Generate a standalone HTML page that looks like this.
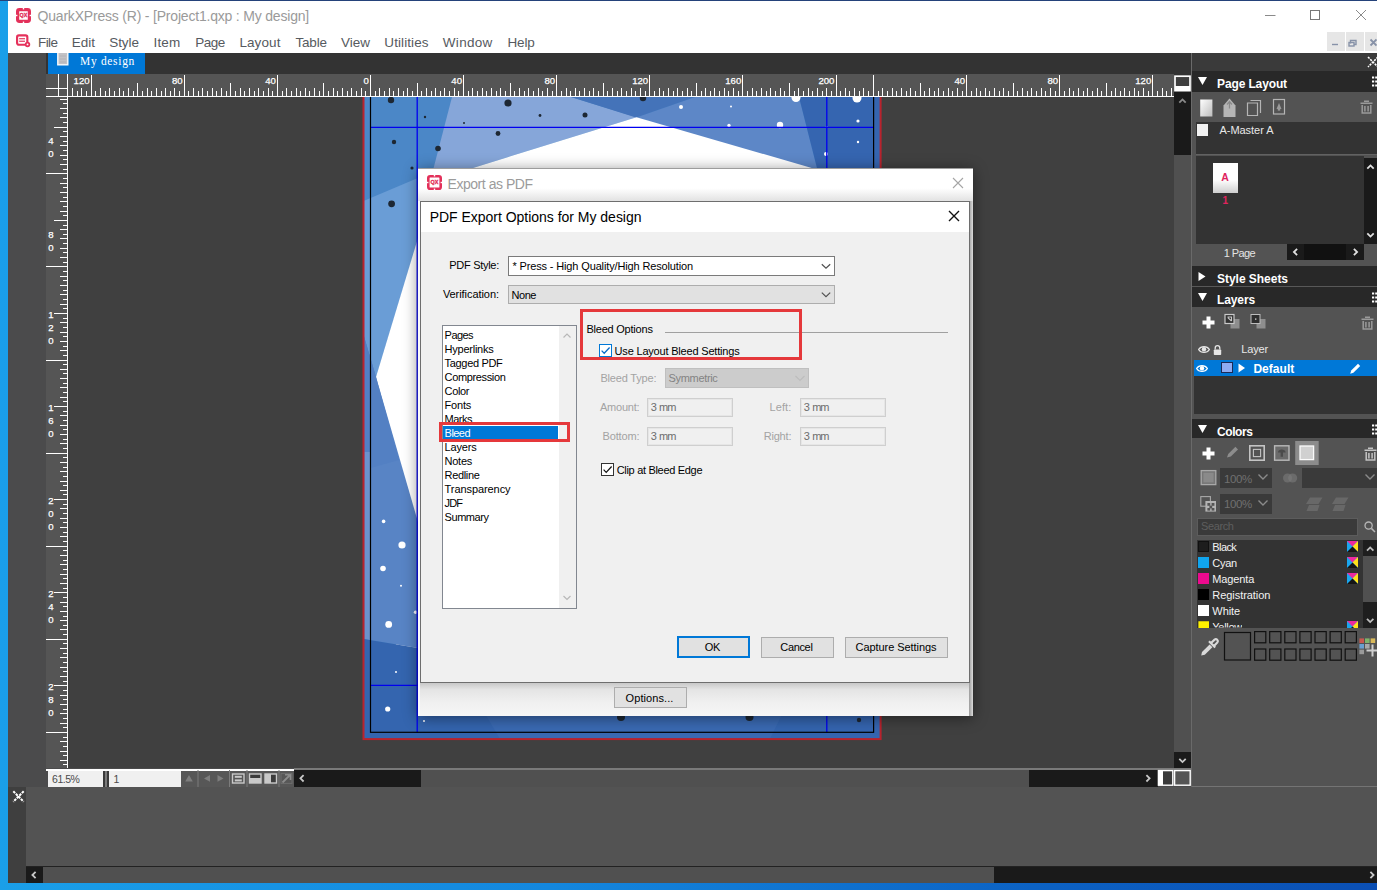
<!DOCTYPE html><html><head><meta charset="utf-8"><title>QuarkXPress - Export as PDF</title><style>html,body{margin:0;padding:0}body{width:1377px;height:890px;position:relative;overflow:hidden;background:linear-gradient(90deg,#1a9fe9 0%,#1487de 40%,#0c62c4 75%,#0b4fb4 100%);font-family:"Liberation Sans",sans-serif}</style></head><body><div style="position:absolute;left:8px;top:53px;width:1369px;height:830px;background:#535353;"></div><div style="position:absolute;left:46px;top:53px;width:1146px;height:21px;background:#333333;"></div><div style="position:absolute;left:48px;top:53px;width:97px;height:20.5px;background:#0078d7;"></div><svg style="position:absolute;left:57px;top:53px" width="12" height="14" viewBox="0 0 12 14"><rect x="0.8" y="-1" width="10" height="12.8" fill="#c2c2c6" stroke="#fafafa" stroke-width="1.4"/><path d="M2.5 3H9M2.5 6H9M2.5 9H9" stroke="#b0b0b4" stroke-width="0.8"/></svg><span style="position:absolute;left:80.0px;top:55.3px;line-height:14px;white-space:pre;font:normal 11.5px 'Liberation Serif', serif;color:#fff;letter-spacing:0.681px;">My design</span><div style="position:absolute;left:8px;top:53px;width:38px;height:734px;background:#4b4b4c;"></div><div style="position:absolute;left:68px;top:97px;width:1106px;height:671px;background:#404040;"></div><svg style="position:absolute;left:68px;top:97px" width="1106" height="671" viewBox="68 97 1106 671"><rect x="363.5" y="60" width="517.1" height="679.0999999999999" fill="#4b87c7"/><polygon points="363.5,201 432,172 440,200 418,240 376,377 363.5,335" fill="#6a9dd6"/><polygon points="452,97 571,97 636.5,117.2 466.5,170 431,178" fill="#86a6d9"/><polygon points="695,97 799,97 818,172 636,117.5" fill="#5d87c7"/><polygon points="571,97 695,97 636,117.5" fill="#4473b9"/><polygon points="799,97 880.6,97 880.6,739.0999999999999 818,739.0999999999999 818,172" fill="#3565b0"/><polygon points="636.5,117.2 816,169.2 816,700 400,700 376,377 418,238 466.5,170" fill="#fff"/><polygon points="363.5,335 376,377 418,522 418,648 363.5,639" fill="#5884c5"/><polygon points="363.5,335 376,377 399,460 363.5,470" fill="#5380c3"/><polygon points="364.5,452 370.0,452 370.0,640 364.5,639" fill="#6c93cd"/><polygon points="363.5,639 418,648 820,700 820,739.0999999999999 363.5,739.0999999999999" fill="#3465af"/><polygon points="477,700 789,700 770,739.0999999999999 500,739.0999999999999" fill="#3a6ab3"/><circle cx="391" cy="100" r="3.2" fill="#1d2733"/><circle cx="508" cy="103" r="3.6" fill="#1d2733"/><circle cx="425" cy="117" r="1.2" fill="#1d2733"/><circle cx="464" cy="123" r="1" fill="#1d2733"/><circle cx="540" cy="115.5" r="1.4" fill="#1d2733"/><circle cx="585" cy="115" r="2.5" fill="#1d2733"/><circle cx="498" cy="133.5" r="2.4" fill="#1d2733"/><circle cx="394" cy="142" r="2.2" fill="#1d2733"/><circle cx="438" cy="148.5" r="2.8" fill="#1d2733"/><circle cx="412" cy="168" r="1.6" fill="#1d2733"/><circle cx="391.6" cy="203.8" r="3.4" fill="#1d2733"/><circle cx="643" cy="98" r="3.2" fill="#1d2733"/><circle cx="621" cy="717" r="4" fill="#1d2733"/><circle cx="749.5" cy="717" r="4" fill="#1d2733"/><circle cx="859" cy="720" r="2.2" fill="#1d2733"/><circle cx="681" cy="107" r="2" fill="#fff"/><circle cx="731" cy="106.5" r="1" fill="#fff"/><circle cx="729" cy="125.5" r="1.7" fill="#fff"/><circle cx="780" cy="125" r="3.2" fill="#fff"/><circle cx="796" cy="97.5" r="4.5" fill="#fff"/><circle cx="857" cy="98" r="4.5" fill="#fff"/><circle cx="858" cy="121" r="1.6" fill="#fff"/><circle cx="858" cy="142" r="1.2" fill="#fff"/><circle cx="826" cy="154" r="2" fill="#fff"/><circle cx="383.6" cy="521.4" r="1.8" fill="#fff"/><circle cx="402" cy="545" r="3.6" fill="#fff"/><circle cx="383" cy="568.5" r="2.8" fill="#fff"/><circle cx="401" cy="585.7" r="1" fill="#fff"/><circle cx="415.6" cy="612.3" r="1.8" fill="#fff"/><circle cx="388.7" cy="624.4" r="3.4" fill="#fff"/><circle cx="396" cy="672" r="1" fill="#fff"/><circle cx="387.7" cy="709" r="2.6" fill="#fff"/><circle cx="424" cy="721" r="1" fill="#fff"/><circle cx="826.7" cy="127" r="1" fill="#fff"/><path d="M370.5 127.3H873.6M370.5 685.4H873.6M417.2 60V732.3M826.8 60V732.3" stroke="#0000f0" stroke-width="1.3" fill="none"/><rect x="370.5" y="80.7" width="503.1" height="651.5999999999999" fill="none" stroke="#000" stroke-width="1.2"/><rect x="363.5" y="73.7" width="517.1" height="665.3999999999999" fill="none" stroke="#b9232d" stroke-width="2"/></svg><svg style="position:absolute;left:68px;top:74px" width="1106" height="23" viewBox="0 0 1106 23"><rect width="1106" height="23" fill="#555555"/><path d="M23.5 1V23M116.5 1V23M209.5 1V23M302.5 1V23M395.5 1V23M488.5 1V23M581.5 1V23M674.5 1V23M768.5 1V23M805.5 1V23M898.5 1V23M991.5 1V23M1084.5 1V23M69.5 9V23M162.5 9V23M255.5 9V23M349.5 9V23M442.5 9V23M535.5 9V23M628.5 9V23M721.5 9V23M852.5 9V23M945.5 9V23M1038.5 9V23M4.5 14V23M13.5 14V23M32.5 14V23M41.5 14V23M51.5 14V23M60.5 14V23M79.5 14V23M88.5 14V23M97.5 14V23M106.5 14V23M125.5 14V23M134.5 14V23M144.5 14V23M153.5 14V23M172.5 14V23M181.5 14V23M190.5 14V23M200.5 14V23M218.5 14V23M228.5 14V23M237.5 14V23M246.5 14V23M265.5 14V23M274.5 14V23M283.5 14V23M293.5 14V23M311.5 14V23M321.5 14V23M330.5 14V23M339.5 14V23M358.5 14V23M367.5 14V23M376.5 14V23M386.5 14V23M404.5 14V23M414.5 14V23M423.5 14V23M432.5 14V23M451.5 14V23M460.5 14V23M470.5 14V23M479.5 14V23M498.5 14V23M507.5 14V23M516.5 14V23M525.5 14V23M544.5 14V23M553.5 14V23M563.5 14V23M572.5 14V23M591.5 14V23M600.5 14V23M609.5 14V23M619.5 14V23M637.5 14V23M646.5 14V23M656.5 14V23M665.5 14V23M684.5 14V23M693.5 14V23M702.5 14V23M712.5 14V23M730.5 14V23M740.5 14V23M749.5 14V23M758.5 14V23M777.5 14V23M786.5 14V23M795.5 14V23M814.5 14V23M824.5 14V23M833.5 14V23M842.5 14V23M861.5 14V23M870.5 14V23M880.5 14V23M889.5 14V23M908.5 14V23M917.5 14V23M926.5 14V23M935.5 14V23M954.5 14V23M963.5 14V23M973.5 14V23M982.5 14V23M1001.5 14V23M1010.5 14V23M1019.5 14V23M1029.5 14V23M1047.5 14V23M1056.5 14V23M1066.5 14V23M1075.5 14V23M1094.5 14V23M1103.5 14V23M9.5 17V23M18.5 17V23M27.5 17V23M37.5 17V23M46.5 17V23M55.5 17V23M65.5 17V23M74.5 17V23M83.5 17V23M93.5 17V23M102.5 17V23M111.5 17V23M120.5 17V23M130.5 17V23M139.5 17V23M148.5 17V23M158.5 17V23M167.5 17V23M176.5 17V23M186.5 17V23M195.5 17V23M204.5 17V23M214.5 17V23M223.5 17V23M232.5 17V23M241.5 17V23M251.5 17V23M260.5 17V23M269.5 17V23M279.5 17V23M288.5 17V23M297.5 17V23M307.5 17V23M316.5 17V23M325.5 17V23M335.5 17V23M344.5 17V23M353.5 17V23M363.5 17V23M372.5 17V23M381.5 17V23M390.5 17V23M400.5 17V23M409.5 17V23M418.5 17V23M428.5 17V23M437.5 17V23M446.5 17V23M456.5 17V23M465.5 17V23M474.5 17V23M484.5 17V23M493.5 17V23M502.5 17V23M511.5 17V23M521.5 17V23M530.5 17V23M539.5 17V23M549.5 17V23M558.5 17V23M567.5 17V23M577.5 17V23M586.5 17V23M595.5 17V23M605.5 17V23M614.5 17V23M623.5 17V23M633.5 17V23M642.5 17V23M651.5 17V23M660.5 17V23M670.5 17V23M679.5 17V23M688.5 17V23M698.5 17V23M707.5 17V23M716.5 17V23M726.5 17V23M735.5 17V23M744.5 17V23M754.5 17V23M763.5 17V23M772.5 17V23M781.5 17V23M791.5 17V23M800.5 17V23M810.5 17V23M819.5 17V23M828.5 17V23M838.5 17V23M847.5 17V23M856.5 17V23M866.5 17V23M875.5 17V23M884.5 17V23M894.5 17V23M903.5 17V23M912.5 17V23M921.5 17V23M931.5 17V23M940.5 17V23M949.5 17V23M959.5 17V23M968.5 17V23M977.5 17V23M987.5 17V23M996.5 17V23M1005.5 17V23M1015.5 17V23M1024.5 17V23M1033.5 17V23M1043.5 17V23M1052.5 17V23M1061.5 17V23M1070.5 17V23M1080.5 17V23M1089.5 17V23M1098.5 17V23" stroke="#fff" stroke-width="1" fill="none" shape-rendering="crispEdges"/><rect x="0" y="22" width="1106" height="1" fill="#fff"/><text x="21.6" y="10.4" text-anchor="end" font-family="Liberation Sans, sans-serif" font-size="9.6" fill="#fff" stroke="#fff" stroke-width="0.25">120</text><text x="114.7" y="10.4" text-anchor="end" font-family="Liberation Sans, sans-serif" font-size="9.6" fill="#fff" stroke="#fff" stroke-width="0.25">80</text><text x="207.8" y="10.4" text-anchor="end" font-family="Liberation Sans, sans-serif" font-size="9.6" fill="#fff" stroke="#fff" stroke-width="0.25">40</text><text x="300.9" y="10.4" text-anchor="end" font-family="Liberation Sans, sans-serif" font-size="9.6" fill="#fff" stroke="#fff" stroke-width="0.25">0</text><text x="394.0" y="10.4" text-anchor="end" font-family="Liberation Sans, sans-serif" font-size="9.6" fill="#fff" stroke="#fff" stroke-width="0.25">40</text><text x="487.1" y="10.4" text-anchor="end" font-family="Liberation Sans, sans-serif" font-size="9.6" fill="#fff" stroke="#fff" stroke-width="0.25">80</text><text x="580.2" y="10.4" text-anchor="end" font-family="Liberation Sans, sans-serif" font-size="9.6" fill="#fff" stroke="#fff" stroke-width="0.25">120</text><text x="673.3" y="10.4" text-anchor="end" font-family="Liberation Sans, sans-serif" font-size="9.6" fill="#fff" stroke="#fff" stroke-width="0.25">160</text><text x="766.4" y="10.4" text-anchor="end" font-family="Liberation Sans, sans-serif" font-size="9.6" fill="#fff" stroke="#fff" stroke-width="0.25">200</text><text x="897.1" y="10.4" text-anchor="end" font-family="Liberation Sans, sans-serif" font-size="9.6" fill="#fff" stroke="#fff" stroke-width="0.25">40</text><text x="990.2" y="10.4" text-anchor="end" font-family="Liberation Sans, sans-serif" font-size="9.6" fill="#fff" stroke="#fff" stroke-width="0.25">80</text><text x="1083.3" y="10.4" text-anchor="end" font-family="Liberation Sans, sans-serif" font-size="9.6" fill="#fff" stroke="#fff" stroke-width="0.25">120</text></svg><svg style="position:absolute;left:46px;top:97px" width="22" height="671" viewBox="0 0 22 671"><rect width="22" height="671" fill="#555555"/><path d="M14 2.5H22M17 6.5H22M14 11.5H22M17 16.5H22M14 20.5H22M17 25.5H22M8 30.5H22M17 34.5H22M14 39.5H22M17 44.5H22M14 48.5H22M17 53.5H22M14 58.5H22M17 62.5H22M14 67.5H22M17 72.5H22M0 76.5H22M17 81.5H22M14 86.5H22M17 90.5H22M14 95.5H22M17 100.5H22M14 104.5H22M17 109.5H22M14 114.5H22M17 118.5H22M8 123.5H22M17 128.5H22M14 132.5H22M17 137.5H22M14 141.5H22M17 146.5H22M14 151.5H22M17 155.5H22M14 160.5H22M17 165.5H22M0 169.5H22M17 174.5H22M14 179.5H22M17 183.5H22M14 188.5H22M17 193.5H22M14 197.5H22M17 202.5H22M14 207.5H22M17 211.5H22M8 216.5H22M17 221.5H22M14 225.5H22M17 230.5H22M14 235.5H22M17 239.5H22M14 244.5H22M17 249.5H22M14 253.5H22M17 258.5H22M0 263.5H22M17 267.5H22M14 272.5H22M17 276.5H22M14 281.5H22M17 286.5H22M14 290.5H22M17 295.5H22M14 300.5H22M17 304.5H22M8 309.5H22M17 314.5H22M14 318.5H22M17 323.5H22M14 328.5H22M17 332.5H22M14 337.5H22M17 342.5H22M14 346.5H22M17 351.5H22M0 356.5H22M17 360.5H22M14 365.5H22M17 370.5H22M14 374.5H22M17 379.5H22M14 384.5H22M17 388.5H22M14 393.5H22M17 397.5H22M8 402.5H22M17 407.5H22M14 411.5H22M17 416.5H22M14 421.5H22M17 425.5H22M14 430.5H22M17 435.5H22M14 439.5H22M17 444.5H22M0 449.5H22M17 453.5H22M14 458.5H22M17 463.5H22M14 467.5H22M17 472.5H22M14 477.5H22M17 481.5H22M14 486.5H22M17 491.5H22M8 495.5H22M17 500.5H22M14 505.5H22M17 509.5H22M14 514.5H22M17 519.5H22M14 523.5H22M17 528.5H22M14 532.5H22M17 537.5H22M0 542.5H22M17 546.5H22M14 551.5H22M17 556.5H22M14 560.5H22M17 565.5H22M14 570.5H22M17 574.5H22M14 579.5H22M17 584.5H22M8 588.5H22M17 593.5H22M14 598.5H22M17 602.5H22M14 607.5H22M17 612.5H22M14 616.5H22M17 621.5H22M14 626.5H22M17 630.5H22M0 635.5H22M17 640.5H22M14 644.5H22M17 649.5H22M14 654.5H22M17 658.5H22M14 663.5H22M17 667.5H22" stroke="#fff" stroke-width="1" fill="none" shape-rendering="crispEdges"/><rect x="21" y="0" width="1" height="671" fill="#fff"/><text x="5" y="47.4" text-anchor="middle" font-family="Liberation Sans, sans-serif" font-size="9.6" fill="#fff" stroke="#fff" stroke-width="0.25">4</text><text x="5" y="60.4" text-anchor="middle" font-family="Liberation Sans, sans-serif" font-size="9.6" fill="#fff" stroke="#fff" stroke-width="0.25">0</text><text x="5" y="140.5" text-anchor="middle" font-family="Liberation Sans, sans-serif" font-size="9.6" fill="#fff" stroke="#fff" stroke-width="0.25">8</text><text x="5" y="153.5" text-anchor="middle" font-family="Liberation Sans, sans-serif" font-size="9.6" fill="#fff" stroke="#fff" stroke-width="0.25">0</text><text x="5" y="220.6" text-anchor="middle" font-family="Liberation Sans, sans-serif" font-size="9.6" fill="#fff" stroke="#fff" stroke-width="0.25">1</text><text x="5" y="233.6" text-anchor="middle" font-family="Liberation Sans, sans-serif" font-size="9.6" fill="#fff" stroke="#fff" stroke-width="0.25">2</text><text x="5" y="246.6" text-anchor="middle" font-family="Liberation Sans, sans-serif" font-size="9.6" fill="#fff" stroke="#fff" stroke-width="0.25">0</text><text x="5" y="313.7" text-anchor="middle" font-family="Liberation Sans, sans-serif" font-size="9.6" fill="#fff" stroke="#fff" stroke-width="0.25">1</text><text x="5" y="326.7" text-anchor="middle" font-family="Liberation Sans, sans-serif" font-size="9.6" fill="#fff" stroke="#fff" stroke-width="0.25">6</text><text x="5" y="339.7" text-anchor="middle" font-family="Liberation Sans, sans-serif" font-size="9.6" fill="#fff" stroke="#fff" stroke-width="0.25">0</text><text x="5" y="406.8" text-anchor="middle" font-family="Liberation Sans, sans-serif" font-size="9.6" fill="#fff" stroke="#fff" stroke-width="0.25">2</text><text x="5" y="419.8" text-anchor="middle" font-family="Liberation Sans, sans-serif" font-size="9.6" fill="#fff" stroke="#fff" stroke-width="0.25">0</text><text x="5" y="432.8" text-anchor="middle" font-family="Liberation Sans, sans-serif" font-size="9.6" fill="#fff" stroke="#fff" stroke-width="0.25">0</text><text x="5" y="499.9" text-anchor="middle" font-family="Liberation Sans, sans-serif" font-size="9.6" fill="#fff" stroke="#fff" stroke-width="0.25">2</text><text x="5" y="512.9" text-anchor="middle" font-family="Liberation Sans, sans-serif" font-size="9.6" fill="#fff" stroke="#fff" stroke-width="0.25">4</text><text x="5" y="525.9" text-anchor="middle" font-family="Liberation Sans, sans-serif" font-size="9.6" fill="#fff" stroke="#fff" stroke-width="0.25">0</text><text x="5" y="593.0" text-anchor="middle" font-family="Liberation Sans, sans-serif" font-size="9.6" fill="#fff" stroke="#fff" stroke-width="0.25">2</text><text x="5" y="606.0" text-anchor="middle" font-family="Liberation Sans, sans-serif" font-size="9.6" fill="#fff" stroke="#fff" stroke-width="0.25">8</text><text x="5" y="619.0" text-anchor="middle" font-family="Liberation Sans, sans-serif" font-size="9.6" fill="#fff" stroke="#fff" stroke-width="0.25">0</text></svg><svg style="position:absolute;left:46px;top:74px" width="22" height="23" viewBox="0 0 22 23"><rect width="22" height="23" fill="#555"/><path d="M0 14.5H22M12.5 0V24M0 22.5H22M21.5 0V24" stroke="#fff" stroke-width="1" fill="none" shape-rendering="crispEdges"/></svg><div style="position:absolute;left:1174px;top:74px;width:17px;height:18px;background:#333;"></div><svg style="position:absolute;left:1174px;top:75px" width="17" height="17" viewBox="0 0 17 17"><rect x="1" y="1.2" width="15" height="14.4" fill="#3f3f3f" stroke="#fff" stroke-width="1.7"/><rect x="1" y="11" width="15" height="4.6" fill="#fff"/></svg><div style="position:absolute;left:1174px;top:92px;width:17px;height:63px;background:#1a1a1a;"></div><div style="position:absolute;left:1174px;top:155px;width:17px;height:597px;background:#505050;"></div><div style="position:absolute;left:1174px;top:752px;width:17px;height:17px;background:#1a1a1a;"></div><svg style="position:absolute;left:1174px;top:92px" width="17" height="677" viewBox="0 0 17 677"><path d="M5.3,10.6L8.5,7.4L11.7,10.6" stroke="#8a8a8a" stroke-width="1.8" fill="none"/><path d="M5.3,666.9L8.5,670.1L11.7,666.9" stroke="#c8c8c8" stroke-width="1.8" fill="none"/></svg><div style="position:absolute;left:8px;top:768px;width:1184px;height:19px;background:#4b4b4c;"></div><div style="position:absolute;left:46px;top:768.8px;width:247.5px;height:1.8px;background:#fff;"></div><div style="position:absolute;left:294px;top:768.4px;width:898px;height:1.2px;background:#7a7a7a;"></div><div style="position:absolute;left:48px;top:771px;width:55px;height:15.5px;background:#f0f0f0;"></div><span style="position:absolute;left:52.0px;top:772.5px;line-height:13px;white-space:pre;font:normal 10.5px 'Liberation Sans', sans-serif;color:#4a4a4a;letter-spacing:-0.456px;">61.5%</span><div style="position:absolute;left:103px;top:770.5px;width:6px;height:16.5px;background:#3a3a3a;"></div><div style="position:absolute;left:105px;top:770.5px;width:1.5px;height:16.5px;background:#7a7a7a;"></div><div style="position:absolute;left:109px;top:771px;width:72px;height:15.5px;background:#f0f0f0;"></div><span style="position:absolute;left:113.5px;top:772.5px;line-height:13px;white-space:pre;font:normal 10.5px 'Liberation Sans', sans-serif;color:#4a4a4a;letter-spacing:0.000px;">1</span><div style="position:absolute;left:181px;top:770.5px;width:113px;height:16.5px;background:#575757;"></div><svg style="position:absolute;left:181px;top:770px" width="113" height="17" viewBox="0 0 113 17"><rect x="16.5" y="0" width="1" height="17" fill="#7c7c7c"/><rect x="48" y="0" width="1" height="17" fill="#7c7c7c"/><rect x="65.5" y="0" width="1" height="17" fill="#7c7c7c"/><rect x="97.5" y="0" width="1" height="17" fill="#7c7c7c"/><path d="M4.2 11.6L8 5L11.8 11.6Z" fill="#7e7e7e"/><path d="M29 5V11.8L23 8.4Z" fill="#7e7e7e"/><path d="M36.5 5V11.8L42.5 8.4Z" fill="#7e7e7e"/><rect x="51.5" y="4" width="11.5" height="9" fill="none" stroke="#c9c9c9" stroke-width="1.4"/><rect x="53.8" y="5.8" width="7" height="2" fill="#c9c9c9"/><rect x="53.8" y="9.4" width="7" height="2" fill="#c9c9c9"/><rect x="68.5" y="4" width="11.5" height="9" fill="#3c3c3c" stroke="#c9c9c9" stroke-width="1.4"/><rect x="68.5" y="8" width="11.5" height="5" fill="#c9c9c9"/><rect x="84" y="4" width="11.5" height="9" fill="#3c3c3c" stroke="#c9c9c9" stroke-width="1.4"/><rect x="84" y="4" width="6" height="9" fill="#c9c9c9"/><path d="M101.5 12.5L109 5M104 4.6H109.6V10" stroke="#8b8b8b" stroke-width="1.8" fill="none"/><rect x="100" y="3.6" width="11" height="9.8" fill="none" stroke="#6e6e6e" stroke-width="1"/></svg><div style="position:absolute;left:294px;top:770px;width:127px;height:17px;background:#1a1a1a;"></div><div style="position:absolute;left:421px;top:770px;width:608px;height:17px;background:#505050;"></div><div style="position:absolute;left:1029px;top:770px;width:129px;height:17px;background:#1a1a1a;"></div><svg style="position:absolute;left:294px;top:770px" width="864" height="17" viewBox="0 0 864 17"><path d="M9.6,5.1000000000000005L6.4,8.3L9.6,11.5" stroke="#c8c8c8" stroke-width="1.8" fill="none"/><path d="M852.4,5.1000000000000005L855.6,8.3L852.4,11.5" stroke="#c8c8c8" stroke-width="1.8" fill="none"/></svg><svg style="position:absolute;left:1157px;top:769px" width="35" height="18" viewBox="0 0 35 18"><rect x="1.4" y="1.6" width="14.4" height="14.6" fill="#3a3a3a" stroke="#fff" stroke-width="1.4"/><rect x="1.4" y="1.6" width="4.6" height="14.6" fill="#fff"/><rect x="17.6" y="1.6" width="15.6" height="14.6" fill="#555" stroke="#fff" stroke-width="1.4"/></svg><div style="position:absolute;left:1191px;top:53px;width:186px;height:734px;background:#535353;"></div><div style="position:absolute;left:1191px;top:53px;width:1px;height:734px;background:#6a6a6a;"></div><div style="position:absolute;left:1192px;top:53px;width:185px;height:18px;background:#3a3a3a;"></div><svg style="position:absolute;left:1367px;top:56px" width="10" height="12" viewBox="0 0 10 12"><path d="M1 1L11 11M11 1L1 11" stroke="#fff" stroke-width="1.6" stroke-dasharray="2.2 1" fill="none"/></svg><div style="position:absolute;left:1192px;top:71px;width:185px;height:20.5px;background:#282828;"></div><svg style="position:absolute;left:1198px;top:77px" width="10" height="10" viewBox="0 0 10 10"><path d="M0 0H9L4.5 8Z" fill="#fff"/></svg><span style="position:absolute;left:1217.0px;top:77.2px;line-height:14px;white-space:pre;font:bold 12px 'Liberation Sans', sans-serif;color:#fff;letter-spacing:-0.124px;">Page Layout</span><svg style="position:absolute;left:1372px;top:76px" width="5" height="12" viewBox="0 0 5 12"><path d="M0 1.5H5M0 5.5H5M0 9.5H5" stroke="#fff" stroke-width="2" stroke-dasharray="2.2 1"/></svg><svg style="position:absolute;left:1198px;top:97px" width="100" height="22" viewBox="0 0 100 22"><defs><linearGradient id="pg" x1="0" y1="0" x2="1" y2="1"><stop offset="0" stop-color="#fff"/><stop offset="1" stop-color="#bdbdbd"/></linearGradient></defs><rect x="2.2" y="2.5" width="12.2" height="17" fill="url(#pg)"/><path d="M25.5 8.5L31.5 1.5L37.5 8.5V20H25.5Z" fill="#b5b5b5"/><path d="M31.5 4.5V11.5M29 7.5L31.5 4.5L34 7.5" stroke="#8a8a8a" stroke-width="1.3" fill="none"/><path d="M52.5 3.5H62.5V16M49.5 6H59.5V18.5H49.5Z" stroke="#b5b5b5" stroke-width="1.2" fill="none"/><rect x="75.5" y="2.5" width="11" height="14.5" stroke="#b5b5b5" stroke-width="1.2" fill="none"/><path d="M81 6L83.5 12H78.5Z" fill="#9a9a9a"/><rect x="79.8" y="11" width="2.4" height="2.6" fill="#9a9a9a"/></svg><svg style="position:absolute;left:1360px;top:100px" width="13" height="14" viewBox="0 0 13 14"><path d="M0.5 3.2H12.5M4 1.2H9M2.2 5V13H10.8V5M4.9 6V11.6M8.1 6V11.6" stroke="#9a9a9a" stroke-width="1.5" fill="none"/></svg><div style="position:absolute;left:1196px;top:121.5px;width:181px;height:33px;background:#333333;"></div><div style="position:absolute;left:1196px;top:154.3px;width:181px;height:1px;background:#626262;"></div><div style="position:absolute;left:1197px;top:124px;width:11px;height:12px;background:#f1f1f1;"></div><span style="position:absolute;left:1219.5px;top:124.0px;line-height:13px;white-space:pre;font:normal 11px 'Liberation Sans', sans-serif;color:#e8e8e8;letter-spacing:-0.041px;">A-Master A</span><div style="position:absolute;left:1196px;top:155.5px;width:168px;height:88.5px;background:#333333;"></div><div style="position:absolute;left:1364px;top:158px;width:13px;height:86px;background:#1a1a1a;"></div><svg style="position:absolute;left:1364px;top:158px" width="13" height="86" viewBox="0 0 13 86"><path d="M3.3,10.6L6.5,7.4L9.7,10.6" stroke="#e0e0e0" stroke-width="1.8" fill="none"/><path d="M3.3,75.4L6.5,78.6L9.7,75.4" stroke="#e0e0e0" stroke-width="1.8" fill="none"/></svg><div style="position:absolute;left:1213px;top:163px;width:24.5px;height:30px;background:linear-gradient(#fff 55%,#cfcfcf 100%);"></div><span style="position:absolute;left:1221.2px;top:171.3px;line-height:13px;white-space:pre;font:bold 10.5px 'Liberation Sans', sans-serif;color:#e0245e;letter-spacing:0.000px;">A</span><span style="position:absolute;left:1222.6px;top:195.3px;line-height:12px;white-space:pre;font:bold 10px 'Liberation Sans', sans-serif;color:#e0245e;letter-spacing:0.000px;">1</span><span style="position:absolute;left:1223.8px;top:246.9px;line-height:13px;white-space:pre;font:normal 11px 'Liberation Sans', sans-serif;color:#e4e4e4;letter-spacing:-0.612px;">1 Page</span><div style="position:absolute;left:1287px;top:244px;width:77px;height:16px;background:#1a1a1a;"></div><div style="position:absolute;left:1304px;top:244px;width:42px;height:16px;background:#111;"></div><svg style="position:absolute;left:1287px;top:244px" width="77" height="16" viewBox="0 0 77 16"><path d="M10.1,4.8L6.9,8L10.1,11.2" stroke="#e0e0e0" stroke-width="1.8" fill="none"/><path d="M66.9,4.8L70.1,8L66.9,11.2" stroke="#e0e0e0" stroke-width="1.8" fill="none"/></svg><div style="position:absolute;left:1192px;top:266px;width:185px;height:20px;background:#282828;"></div><svg style="position:absolute;left:1198px;top:272px" width="10" height="10" viewBox="0 0 10 10"><path d="M0.5 0V9L7.5 4.5Z" fill="#fff"/></svg><span style="position:absolute;left:1217.0px;top:272.0px;line-height:14px;white-space:pre;font:bold 12px 'Liberation Sans', sans-serif;color:#fff;letter-spacing:-0.031px;">Style Sheets</span><div style="position:absolute;left:1192px;top:286px;width:185px;height:1px;background:#585858;"></div><div style="position:absolute;left:1192px;top:287px;width:185px;height:20px;background:#282828;"></div><svg style="position:absolute;left:1198px;top:293px" width="10" height="10" viewBox="0 0 10 10"><path d="M0 0H9L4.5 8Z" fill="#fff"/></svg><span style="position:absolute;left:1217.0px;top:293.0px;line-height:14px;white-space:pre;font:bold 12px 'Liberation Sans', sans-serif;color:#fff;letter-spacing:-0.117px;">Layers</span><svg style="position:absolute;left:1372px;top:292px" width="5" height="12" viewBox="0 0 5 12"><path d="M0 1.5H5M0 5.5H5M0 9.5H5" stroke="#fff" stroke-width="2" stroke-dasharray="2.2 1"/></svg><svg style="position:absolute;left:1201.5px;top:315.5px" width="13" height="13" viewBox="0 0 13 13"><path d="M6.5 0.5V12.5M0.5 6.5H12.5" stroke="#fff" stroke-width="4"/></svg><svg style="position:absolute;left:1224px;top:313px" width="46" height="18" viewBox="0 0 46 18"><rect x="6.5" y="6" width="9" height="9.5" fill="#8e8e8e"/><rect x="1" y="1.5" width="9" height="9" fill="#333" stroke="#c9c9c9" stroke-width="1.2"/><path d="M3.5 4H7.5V8M7.5 8L3.8 4.6" stroke="#c9c9c9" stroke-width="1.1" fill="none"/><rect x="32.5" y="6" width="9" height="9.5" fill="#8e8e8e"/><rect x="27" y="1.5" width="9" height="9" fill="#2e2e2e" stroke="#bdbdbd" stroke-width="1"/><rect x="31" y="5.4" width="1.4" height="1.4" fill="#ccc"/></svg><svg style="position:absolute;left:1361px;top:316px" width="13" height="14" viewBox="0 0 13 14"><path d="M0.5 3.2H12.5M4 1.2H9M2.2 5V13H10.8V5M4.9 6V11.6M8.1 6V11.6" stroke="#9a9a9a" stroke-width="1.5" fill="none"/></svg><svg style="position:absolute;left:1197.5px;top:345px" width="26" height="11" viewBox="0 0 26 11"><path d="M0.6 4.5C3 0.6 9 0.6 11.4 4.5C9 8.4 3 8.4 0.6 4.5Z" fill="none" stroke="#e6e6e6" stroke-width="1.3"/><circle cx="6" cy="4.3" r="2.2" fill="#e6e6e6"/><path d="M17.2 4.6V3A2.3 2.3 0 0 1 21.8 3V4.6" stroke="#e6e6e6" stroke-width="1.3" fill="none"/><rect x="15.8" y="4.4" width="7.4" height="5.6" rx="0.8" fill="#e6e6e6"/></svg><span style="position:absolute;left:1241.2px;top:343.0px;line-height:13px;white-space:pre;font:normal 11px 'Liberation Sans', sans-serif;color:#e8e8e8;letter-spacing:-0.146px;">Layer</span><div style="position:absolute;left:1193.5px;top:360.2px;width:183.5px;height:15.8px;background:#0078d7;"></div><svg style="position:absolute;left:1195.5px;top:363.5px" width="12" height="10" viewBox="0 0 12 10"><path d="M0.6 4.5C3 0.6 9 0.6 11.4 4.5C9 8.4 3 8.4 0.6 4.5Z" fill="none" stroke="#fff" stroke-width="1.3"/><circle cx="6" cy="4.3" r="2.2" fill="#fff"/></svg><div style="position:absolute;left:1221.3px;top:361.8px;width:11.5px;height:11.2px;background:#8fabf2;box-sizing:border-box;border:1px solid #1c2a55;"></div><svg style="position:absolute;left:1238px;top:363px" width="8" height="10" viewBox="0 0 8 10"><path d="M0.5 0.5V9.5L7 5Z" fill="#fff"/></svg><span style="position:absolute;left:1253.4px;top:361.8px;line-height:14px;white-space:pre;font:bold 12px 'Liberation Sans', sans-serif;color:#fff;letter-spacing:0.033px;">Default</span><svg style="position:absolute;left:1349px;top:361.5px" width="13" height="13" viewBox="0 0 13 13"><path d="M1.2 11.8L2.2 8.6L9 1.8L11.2 4L4.4 10.8Z" fill="#fff"/></svg><div style="position:absolute;left:1194px;top:376px;width:183px;height:37.5px;background:#333333;"></div><div style="position:absolute;left:1192px;top:419px;width:185px;height:19px;background:#282828;"></div><svg style="position:absolute;left:1198px;top:425px" width="10" height="10" viewBox="0 0 10 10"><path d="M0 0H9L4.5 8Z" fill="#fff"/></svg><span style="position:absolute;left:1217.0px;top:424.5px;line-height:14px;white-space:pre;font:bold 12px 'Liberation Sans', sans-serif;color:#fff;letter-spacing:-0.419px;">Colors</span><svg style="position:absolute;left:1372px;top:424px" width="5" height="12" viewBox="0 0 5 12"><path d="M0 1.5H5M0 5.5H5M0 9.5H5" stroke="#fff" stroke-width="2" stroke-dasharray="2.2 1"/></svg><svg style="position:absolute;left:1201.5px;top:446.5px" width="13" height="13" viewBox="0 0 13 13"><path d="M6.5 0.5V12.5M0.5 6.5H12.5" stroke="#fff" stroke-width="4"/></svg><svg style="position:absolute;left:1224px;top:440px" width="100" height="26" viewBox="0 0 100 26"><path d="M3 17.6L4.2 14L11.4 6.8L14 9.4L6.8 16.6Z" fill="#8d8d8d"/><rect x="25.8" y="5.8" width="14.4" height="14.4" fill="none" stroke="#c4c4c4" stroke-width="1.6"/><rect x="29.4" y="9.4" width="7.2" height="7.2" fill="none" stroke="#c4c4c4" stroke-width="1.1"/><rect x="50.6" y="5.8" width="14.4" height="14.4" fill="#6a6a6a" stroke="#b9b9b9" stroke-width="1.4"/><path d="M54 12.4C54 8.6 61.6 8.6 61.6 12.4H59V16.8H56.6V12.4Z" fill="#4a4a4a"/><rect x="71.2" y="1" width="23.5" height="24" fill="#8c8c8c"/><rect x="76" y="6" width="13.6" height="13.6" fill="#d0d0d0" stroke="#fafafa" stroke-width="1.3"/></svg><svg style="position:absolute;left:1363.6px;top:446.8px" width="13" height="14" viewBox="0 0 13 14"><path d="M0.5 3.2H12.5M4 1.2H9M2.2 5V13H10.8V5M4.9 6V11.6M8.1 6V11.6" stroke="#c4c4c4" stroke-width="1.5" fill="none"/></svg><svg style="position:absolute;left:1200px;top:469px" width="18" height="44" viewBox="0 0 18 44"><rect x="1.2" y="1.6" width="14.6" height="14" fill="#777" stroke="#a9a9a9" stroke-width="1.3"/><rect x="3.4" y="3.8" width="10.2" height="9.6" fill="#8a8a8a"/><rect x="0.8" y="27.6" width="9.6" height="9.6" fill="none" stroke="#a9a9a9" stroke-width="1.1"/><rect x="5.4" y="32" width="10.6" height="10.6" fill="#b3b3b3"/><rect x="7.4" y="34" width="2.8" height="2.8" fill="#555"/><rect x="11.6" y="34" width="2.8" height="2.8" fill="#555"/><rect x="9.4" y="36.6" width="2.8" height="2.8" fill="#555"/><rect x="7.4" y="39" width="2.8" height="2.6" fill="#555"/><rect x="11.6" y="39" width="2.8" height="2.6" fill="#555"/></svg><div style="position:absolute;left:1220.3px;top:468.3px;width:51.8px;height:19.6px;background:#3a3a3a;"></div><span style="position:absolute;left:1224.0px;top:472.5px;line-height:14px;white-space:pre;font:normal 11.5px 'Liberation Sans', sans-serif;color:#707070;letter-spacing:-0.355px;">100%</span><svg style="position:absolute;left:1256px;top:472.3px" width="14" height="10" viewBox="0 0 14 10"><path d="M2.5 2.5L7 7L11.5 2.5" stroke="#8a8a8a" stroke-width="1.4" fill="none"/></svg><div style="position:absolute;left:1220.3px;top:494px;width:51.8px;height:19.6px;background:#3a3a3a;"></div><span style="position:absolute;left:1224.0px;top:498.2px;line-height:14px;white-space:pre;font:normal 11.5px 'Liberation Sans', sans-serif;color:#707070;letter-spacing:-0.355px;">100%</span><svg style="position:absolute;left:1256px;top:498px" width="14" height="10" viewBox="0 0 14 10"><path d="M2.5 2.5L7 7L11.5 2.5" stroke="#8a8a8a" stroke-width="1.4" fill="none"/></svg><div style="position:absolute;left:1302px;top:468.3px;width:75px;height:19.6px;background:#3a3a3a;"></div><svg style="position:absolute;left:1363px;top:472.3px" width="14" height="10" viewBox="0 0 14 10"><path d="M2.5 2.5L7 7L11.5 2.5" stroke="#8a8a8a" stroke-width="1.4" fill="none"/></svg><svg style="position:absolute;left:1282px;top:471px" width="68" height="42" viewBox="0 0 68 42"><circle cx="5.6" cy="7" r="4.6" fill="#6b6b6b"/><circle cx="10.6" cy="7" r="4.6" fill="#6b6b6b"/><path d="M8.1 3.2A4.6 4.6 0 0 1 8.1 10.8A4.6 4.6 0 0 1 8.1 3.2Z" fill="#757575"/><path d="M28 26.5H40.5L36.5 33H24Z M27 34H37.5L35.5 40H24.5Z" fill="#686868"/><path d="M54 26.5H66.5L62.5 33H50Z M53 34H63.5L61.5 40H50.5Z" fill="#686868"/></svg><div style="position:absolute;left:1196.8px;top:518.3px;width:161px;height:17.8px;background:#3a3a3a;box-sizing:border-box;border:1px solid #5c5c5c;"></div><span style="position:absolute;left:1201.0px;top:519.5px;line-height:13px;white-space:pre;font:normal 11px 'Liberation Sans', sans-serif;color:#5e5e5e;letter-spacing:-0.393px;">Search</span><svg style="position:absolute;left:1363px;top:520px" width="14" height="14" viewBox="0 0 14 14"><circle cx="5.6" cy="5.6" r="3.6" stroke="#b5b5b5" stroke-width="1.3" fill="none"/><path d="M8.4 8.4L12 12" stroke="#b5b5b5" stroke-width="1.5"/></svg><div style="position:absolute;left:1196.5px;top:539.5px;width:166px;height:88.5px;background:#333333;"></div><div style="position:absolute;left:1198.4px;top:541.1999999999999px;width:11px;height:11.2px;background:#1d1d1d;box-sizing:border-box;border:1px solid #101010;"></div><span style="position:absolute;left:1212.3px;top:540.6px;line-height:13px;white-space:pre;font:normal 11px 'Liberation Sans', sans-serif;color:#f2f2f2;letter-spacing:-0.581px;">Black</span><svg style="position:absolute;left:1347px;top:541.0px" width="11" height="11" viewBox="0 0 11 11"><rect width="11" height="11" fill="#1aa6ee"/><path d="M0 0H11L5.5 5.5Z" fill="#ec2aa0"/><path d="M11 0V11L5.5 5.5Z" fill="#ffe11a"/><path d="M0 11H11L5.5 5.5Z" fill="#151515"/></svg><div style="position:absolute;left:1198.4px;top:557.1999999999999px;width:11px;height:11.2px;background:#10a5ee;box-sizing:border-box;"></div><span style="position:absolute;left:1212.3px;top:556.6px;line-height:13px;white-space:pre;font:normal 11px 'Liberation Sans', sans-serif;color:#f2f2f2;letter-spacing:-0.247px;">Cyan</span><svg style="position:absolute;left:1347px;top:557.0px" width="11" height="11" viewBox="0 0 11 11"><rect width="11" height="11" fill="#1aa6ee"/><path d="M0 0H11L5.5 5.5Z" fill="#ec2aa0"/><path d="M11 0V11L5.5 5.5Z" fill="#ffe11a"/><path d="M0 11H11L5.5 5.5Z" fill="#151515"/></svg><div style="position:absolute;left:1198.4px;top:573.1999999999999px;width:11px;height:11.2px;background:#ec0a8e;box-sizing:border-box;"></div><span style="position:absolute;left:1212.3px;top:572.6px;line-height:13px;white-space:pre;font:normal 11px 'Liberation Sans', sans-serif;color:#f2f2f2;letter-spacing:-0.116px;">Magenta</span><svg style="position:absolute;left:1347px;top:573.0px" width="11" height="11" viewBox="0 0 11 11"><rect width="11" height="11" fill="#1aa6ee"/><path d="M0 0H11L5.5 5.5Z" fill="#ec2aa0"/><path d="M11 0V11L5.5 5.5Z" fill="#ffe11a"/><path d="M0 11H11L5.5 5.5Z" fill="#151515"/></svg><div style="position:absolute;left:1198.4px;top:589.1999999999999px;width:11px;height:11.2px;background:#000;box-sizing:border-box;"></div><span style="position:absolute;left:1212.3px;top:588.6px;line-height:13px;white-space:pre;font:normal 11px 'Liberation Sans', sans-serif;color:#f2f2f2;letter-spacing:-0.050px;">Registration</span><div style="position:absolute;left:1198.4px;top:605.1999999999999px;width:11px;height:11.2px;background:#fff;box-sizing:border-box;"></div><span style="position:absolute;left:1212.3px;top:604.6px;line-height:13px;white-space:pre;font:normal 11px 'Liberation Sans', sans-serif;color:#f2f2f2;letter-spacing:-0.045px;">White</span><div style="position:absolute;left:1198.4px;top:621.1999999999999px;width:11px;height:11.2px;background:#fff200;box-sizing:border-box;clip-path:inset(0 0 4px 0);"></div><span style="position:absolute;left:1212.3px;top:620.6px;line-height:13px;white-space:pre;font:normal 11px 'Liberation Sans', sans-serif;color:#f2f2f2;letter-spacing:-0.284px;clip-path:inset(0 0 5.2px 0);">Yellow</span><svg style="position:absolute;left:1347px;top:621.0px" width="11" height="11" viewBox="0 0 11 11"><rect width="11" height="11" fill="#1aa6ee"/><path d="M0 0H11L5.5 5.5Z" fill="#ec2aa0"/><path d="M11 0V11L5.5 5.5Z" fill="#ffe11a"/><path d="M0 11H11L5.5 5.5Z" fill="#151515"/></svg><div style="position:absolute;left:1196.5px;top:628px;width:181px;height:4px;background:#535353;"></div><div style="position:absolute;left:1362.7px;top:539.5px;width:14.3px;height:16.4px;background:#1e1e1e;"></div><div style="position:absolute;left:1362.7px;top:556px;width:14.3px;height:46px;background:#505050;"></div><div style="position:absolute;left:1362.7px;top:602px;width:14.3px;height:26px;background:#1e1e1e;"></div><svg style="position:absolute;left:1362.7px;top:539.5px" width="14" height="89" viewBox="0 0 14 89"><path d="M4.0,10.6L7.2,7.4L10.4,10.6" stroke="#bdbdbd" stroke-width="1.8" fill="none"/><path d="M4.0,78.9L7.2,82.1L10.4,78.9" stroke="#bdbdbd" stroke-width="1.8" fill="none"/></svg><svg style="position:absolute;left:1196px;top:629px" width="181" height="34" viewBox="0 0 181 34"><path d="M5.2 26.4L6 23L13.6 15.4L16.4 18.2L8.8 25.8Z" fill="#d9d9d9"/><path d="M13 12.2L19.2 18.6M15 14L18.6 10.6A2 2 0 0 1 21.4 13.4L18 17" stroke="#d9d9d9" stroke-width="2.2" fill="none"/><rect x="28.5" y="3.5" width="26" height="27.5" fill="#535353" stroke="#111" stroke-width="1.2"/><rect x="58.6" y="2.6" width="11.2" height="11.2" fill="#535353" stroke="#111" stroke-width="1.2"/><rect x="73.7" y="2.6" width="11.2" height="11.2" fill="#535353" stroke="#111" stroke-width="1.2"/><rect x="88.8" y="2.6" width="11.2" height="11.2" fill="#535353" stroke="#111" stroke-width="1.2"/><rect x="103.9" y="2.6" width="11.2" height="11.2" fill="#535353" stroke="#111" stroke-width="1.2"/><rect x="119.0" y="2.6" width="11.2" height="11.2" fill="#535353" stroke="#111" stroke-width="1.2"/><rect x="134.1" y="2.6" width="11.2" height="11.2" fill="#535353" stroke="#111" stroke-width="1.2"/><rect x="149.2" y="2.6" width="11.2" height="11.2" fill="#535353" stroke="#111" stroke-width="1.2"/><rect x="58.6" y="20.0" width="11.2" height="11.2" fill="#535353" stroke="#111" stroke-width="1.2"/><rect x="73.7" y="20.0" width="11.2" height="11.2" fill="#535353" stroke="#111" stroke-width="1.2"/><rect x="88.8" y="20.0" width="11.2" height="11.2" fill="#535353" stroke="#111" stroke-width="1.2"/><rect x="103.9" y="20.0" width="11.2" height="11.2" fill="#535353" stroke="#111" stroke-width="1.2"/><rect x="119.0" y="20.0" width="11.2" height="11.2" fill="#535353" stroke="#111" stroke-width="1.2"/><rect x="134.1" y="20.0" width="11.2" height="11.2" fill="#535353" stroke="#111" stroke-width="1.2"/><rect x="149.2" y="20.0" width="11.2" height="11.2" fill="#535353" stroke="#111" stroke-width="1.2"/><rect x="163.4" y="9.4" width="4.6" height="4.6" fill="#c8584f"/><rect x="169" y="9.4" width="4.6" height="4.6" fill="#7fb36a"/><rect x="174.6" y="9.4" width="4.6" height="4.6" fill="#d9b95a"/><rect x="163.4" y="15" width="4.6" height="4.6" fill="#6a9fd0"/><rect x="169" y="15" width="4.6" height="4.6" fill="#a9a9a9"/><rect x="163.4" y="20.6" width="4.6" height="4.6" fill="#9a9a9a"/><path d="M176.5 15.5V27.5M170.5 21.5H181" stroke="#cfcfcf" stroke-width="2"/></svg><div style="position:absolute;left:1192px;top:786.3px;width:185px;height:1px;background:#747474;"></div><div style="position:absolute;left:8px;top:787px;width:1369px;height:96px;background:#535353;"></div><div style="position:absolute;left:8px;top:787px;width:18px;height:96px;background:#3f3f3f;"></div><svg style="position:absolute;left:11.5px;top:789.5px" width="13" height="13" viewBox="0 0 12 12"><path d="M1.2 1.2L10.8 10.8M10.8 1.2L1.2 10.8" stroke="#fff" stroke-width="1.9" stroke-dasharray="2.4 0.9" fill="none"/></svg><div style="position:absolute;left:26px;top:866px;width:1351px;height:1px;background:#222;"></div><div style="position:absolute;left:26px;top:867px;width:17px;height:16px;background:#1a1a1a;"></div><div style="position:absolute;left:43px;top:867px;width:951px;height:16px;background:#505050;"></div><div style="position:absolute;left:994px;top:867px;width:383px;height:16px;background:#1a1a1a;"></div><svg style="position:absolute;left:26px;top:867px" width="1351" height="16" viewBox="0 0 1351 16"><path d="M9.6,4.8L6.4,8L9.6,11.2" stroke="#c8c8c8" stroke-width="1.8" fill="none"/><path d="M1344.4,4.8L1347.6,8L1344.4,11.2" stroke="#c8c8c8" stroke-width="1.8" fill="none"/></svg><div style="position:absolute;left:8px;top:1px;width:1369px;height:52px;background:#fff;"></div><div style="position:absolute;left:0px;top:0px;width:1377px;height:1px;background:#24427a;"></div><svg style="position:absolute;left:16.4px;top:7.7px" width="15" height="15" viewBox="0 0 15 15"><rect x="1.6" y="1.6" width="11.8" height="11.8" rx="1.8" fill="#fff" stroke="#e3305a" stroke-width="3.2"/><rect x="6.8" y="0" width="1.4" height="1.4" fill="#fff"/><rect x="6.8" y="13.6" width="1.4" height="1.4" fill="#fff"/><rect x="0" y="6.8" width="1.4" height="1.4" fill="#fff"/><rect x="13.6" y="6.8" width="1.4" height="1.4" fill="#fff"/><text x="7.5" y="9.4" font-family="Liberation Sans, sans-serif" font-weight="bold" font-size="5.4" fill="#e3305a" stroke="#e3305a" stroke-width="0.35" text-anchor="middle">QX</text></svg><span style="position:absolute;left:37.5px;top:8.0px;line-height:17px;white-space:pre;font:normal 14px 'Liberation Sans', sans-serif;color:#9a9a9a;letter-spacing:-0.195px;">QuarkXPress (R) - [Project1.qxp : My design]</span><svg style="position:absolute;left:1255px;top:5px" width="120" height="22" viewBox="0 0 120 22" fill="none" stroke="#8a8a8a" stroke-width="1"><path d="M10 10.5H20.5"/><rect x="55.5" y="5.5" width="9" height="9" stroke="#777"/><path d="M101 5L111 15M111 5L101 15" stroke="#8a8a8a"/></svg><svg style="position:absolute;left:15.6px;top:34px" width="15.3" height="14.4" viewBox="0 0 17 16"><rect x="1.2" y="1.6" width="11.4" height="10.4" rx="2" fill="#fff" stroke="#e5315b" stroke-width="2.4"/><rect x="3.5" y="4.6" width="6.5" height="1.3" fill="#e5315b"/><rect x="3.5" y="7.4" width="6.5" height="1.3" fill="#e5315b"/><circle cx="12.8" cy="11.6" r="3" fill="#e5315b"/><circle cx="12.8" cy="11.6" r="1" fill="#fff"/></svg><span style="position:absolute;left:38.1px;top:34.6px;line-height:16px;white-space:pre;font:normal 13.5px 'Liberation Sans', sans-serif;color:#565a60;letter-spacing:-0.616px;">File</span><span style="position:absolute;left:71.7px;top:34.6px;line-height:16px;white-space:pre;font:normal 13.5px 'Liberation Sans', sans-serif;color:#565a60;letter-spacing:0.009px;">Edit</span><span style="position:absolute;left:109.3px;top:34.6px;line-height:16px;white-space:pre;font:normal 13.5px 'Liberation Sans', sans-serif;color:#565a60;letter-spacing:-0.103px;">Style</span><span style="position:absolute;left:153.5px;top:34.6px;line-height:16px;white-space:pre;font:normal 13.5px 'Liberation Sans', sans-serif;color:#565a60;letter-spacing:0.184px;">Item</span><span style="position:absolute;left:195.2px;top:34.6px;line-height:16px;white-space:pre;font:normal 13.5px 'Liberation Sans', sans-serif;color:#565a60;letter-spacing:-0.508px;">Page</span><span style="position:absolute;left:239.4px;top:34.6px;line-height:16px;white-space:pre;font:normal 13.5px 'Liberation Sans', sans-serif;color:#565a60;letter-spacing:0.109px;">Layout</span><span style="position:absolute;left:295.4px;top:34.6px;line-height:16px;white-space:pre;font:normal 13.5px 'Liberation Sans', sans-serif;color:#565a60;letter-spacing:-0.156px;">Table</span><span style="position:absolute;left:341.1px;top:34.6px;line-height:16px;white-space:pre;font:normal 13.5px 'Liberation Sans', sans-serif;color:#565a60;letter-spacing:-0.033px;">View</span><span style="position:absolute;left:384.3px;top:34.6px;line-height:16px;white-space:pre;font:normal 13.5px 'Liberation Sans', sans-serif;color:#565a60;letter-spacing:0.087px;">Utilities</span><span style="position:absolute;left:442.8px;top:34.6px;line-height:16px;white-space:pre;font:normal 13.5px 'Liberation Sans', sans-serif;color:#565a60;letter-spacing:0.297px;">Window</span><span style="position:absolute;left:507.4px;top:34.6px;line-height:16px;white-space:pre;font:normal 13.5px 'Liberation Sans', sans-serif;color:#565a60;letter-spacing:-0.091px;">Help</span><div style="position:absolute;left:1327px;top:32px;width:18px;height:19px;background:#e6e6e6;"></div><div style="position:absolute;left:1346px;top:32px;width:18px;height:19px;background:#e6e6e6;"></div><div style="position:absolute;left:1365px;top:32px;width:12px;height:19px;background:#e6e6e6;"></div><svg style="position:absolute;left:1327px;top:32px" width="50" height="19" viewBox="0 0 50 19" fill="none" stroke="#8792a8" stroke-width="1.4"><path d="M5 12.5H11"/><path d="M23.5 11.5v-3h5.5v4h-2"/><rect x="22" y="10.5" width="5" height="3.5"/><path d="M43.5 7.5l6 6M49.5 7.5l-6 6" stroke-width="1.8"/></svg><div style="position:absolute;left:418px;top:168px;width:555px;height:548px;background:#f0f0f0;box-shadow:0 2px 14px rgba(0,0,0,.45);"></div><div style="position:absolute;left:418px;top:168px;width:555px;height:33px;background:linear-gradient(#fff 60%,#e2e2e2 100%);box-sizing:border-box;border-top:1px solid #9c9c9c;"></div><svg style="position:absolute;left:427px;top:175px" width="15" height="15" viewBox="0 0 15 15"><rect x="1.3" y="1.3" width="12.4" height="12.4" rx="1.8" fill="#fff" stroke="#e3305a" stroke-width="2.6"/><rect x="6.8" y="0" width="1.4" height="1.4" fill="#fff"/><rect x="6.8" y="13.6" width="1.4" height="1.4" fill="#fff"/><rect x="0" y="6.8" width="1.4" height="1.4" fill="#fff"/><rect x="13.6" y="6.8" width="1.4" height="1.4" fill="#fff"/><text x="7.5" y="9.4" font-family="Liberation Sans, sans-serif" font-weight="bold" font-size="5.4" fill="#e3305a" stroke="#e3305a" stroke-width="0.35" text-anchor="middle">QX</text></svg><span style="position:absolute;left:447.6px;top:176.2px;line-height:17px;white-space:pre;font:normal 14px 'Liberation Sans', sans-serif;color:#9b9b9b;letter-spacing:-0.472px;">Export as PDF</span><svg style="position:absolute;left:951px;top:176px" width="14" height="14" viewBox="0 0 14 14"><path d="M2 2L12 12M12 2L2 12" stroke="#a5a5a5" stroke-width="1.1"/></svg><div style="position:absolute;left:420px;top:682px;width:552px;height:34px;background:linear-gradient(#c4c4c4 0,#e4e4e4 22%,#f0f0f0 60%,#f6f6f6 100%);"></div><div style="position:absolute;left:969px;top:201px;width:4px;height:515px;background:linear-gradient(90deg,#9a9a9a,#dcdcdc);"></div><div style="position:absolute;left:418px;top:201px;width:2.4px;height:515px;background:#fafafa;"></div><div style="position:absolute;left:614px;top:687px;width:73px;height:21px;background:#e1e1e1;box-sizing:border-box;border:1px solid #adadad;"></div><span style="position:absolute;left:625.6px;top:691.5px;line-height:13px;white-space:pre;font:normal 11px 'Liberation Sans', sans-serif;color:#000;letter-spacing:0.082px;">Options...</span><div style="position:absolute;left:420px;top:200.5px;width:550px;height:482px;background:#f0f0f0;box-sizing:border-box;border:1px solid #6e6e6e;"></div><div style="position:absolute;left:421px;top:201.5px;width:548px;height:30.5px;background:#fff;"></div><span style="position:absolute;left:429.7px;top:208.5px;line-height:17px;white-space:pre;font:normal 14px 'Liberation Sans', sans-serif;color:#000;letter-spacing:-0.019px;">PDF Export Options for My design</span><svg style="position:absolute;left:947px;top:209px" width="14" height="14" viewBox="0 0 14 14"><path d="M2 2L12 12M12 2L2 12" stroke="#111" stroke-width="1.4"/></svg><span style="position:absolute;left:449.2px;top:259.0px;line-height:13px;white-space:pre;font:normal 11px 'Liberation Sans', sans-serif;color:#000;letter-spacing:-0.278px;">PDF Style:</span><div style="position:absolute;left:508px;top:255.5px;width:327px;height:20.5px;background:#fff;box-sizing:border-box;border:1px solid #7a7a7a;"></div><span style="position:absolute;left:512.4px;top:259.5px;line-height:13px;white-space:pre;font:normal 11px 'Liberation Sans', sans-serif;color:#000;letter-spacing:-0.138px;">* Press - High Quality/High Resolution</span><span style="position:absolute;left:442.9px;top:288.0px;line-height:13px;white-space:pre;font:normal 11px 'Liberation Sans', sans-serif;color:#000;letter-spacing:-0.060px;">Verification:</span><div style="position:absolute;left:508px;top:284.5px;width:327px;height:19.5px;background:#e1e1e1;box-sizing:border-box;border:1px solid #adadad;"></div><span style="position:absolute;left:511.6px;top:288.5px;line-height:13px;white-space:pre;font:normal 11px 'Liberation Sans', sans-serif;color:#000;letter-spacing:-0.474px;">None</span><svg style="position:absolute;left:818px;top:258px" width="16" height="44" viewBox="0 0 16 44" fill="none" stroke="#505050" stroke-width="1.2"><path d="M3.8 6.2L8 10.2L12.2 6.2M3.8 34.6L8 38.6L12.2 34.6"/></svg><div style="position:absolute;left:442px;top:325px;width:135px;height:283.5px;background:#fff;box-sizing:border-box;border:1px solid #828790;"></div><div style="position:absolute;left:559px;top:326px;width:17px;height:281.5px;background:#f0f0f0;"></div><svg style="position:absolute;left:559px;top:326px" width="17" height="282" viewBox="0 0 17 282" fill="none" stroke="#b8b8b8" stroke-width="1.2"><path d="M4.5 11.5L8 8L11.5 11.5M4.5 270L8 273.5L11.5 270"/></svg><span style="position:absolute;left:444.6px;top:328.8px;line-height:13px;white-space:pre;font:normal 11px 'Liberation Sans', sans-serif;color:#000;letter-spacing:-0.541px;">Pages</span><span style="position:absolute;left:444.6px;top:342.8px;line-height:13px;white-space:pre;font:normal 11px 'Liberation Sans', sans-serif;color:#000;letter-spacing:-0.246px;">Hyperlinks</span><span style="position:absolute;left:444.6px;top:356.8px;line-height:13px;white-space:pre;font:normal 11px 'Liberation Sans', sans-serif;color:#000;letter-spacing:-0.326px;">Tagged PDF</span><span style="position:absolute;left:444.6px;top:370.8px;line-height:13px;white-space:pre;font:normal 11px 'Liberation Sans', sans-serif;color:#000;letter-spacing:-0.356px;">Compression</span><span style="position:absolute;left:444.6px;top:384.8px;line-height:13px;white-space:pre;font:normal 11px 'Liberation Sans', sans-serif;color:#000;letter-spacing:-0.379px;">Color</span><span style="position:absolute;left:444.6px;top:398.8px;line-height:13px;white-space:pre;font:normal 11px 'Liberation Sans', sans-serif;color:#000;letter-spacing:-0.223px;">Fonts</span><span style="position:absolute;left:444.6px;top:412.8px;line-height:13px;white-space:pre;font:normal 11px 'Liberation Sans', sans-serif;color:#000;letter-spacing:-0.511px;">Marks</span><div style="position:absolute;left:443.3px;top:425.6px;width:114.7px;height:13.6px;background:#0078d7;"></div><span style="position:absolute;left:444.6px;top:426.5px;line-height:13px;white-space:pre;font:normal 11px 'Liberation Sans', sans-serif;color:#fff;letter-spacing:-0.548px;">Bleed</span><span style="position:absolute;left:444.6px;top:440.8px;line-height:13px;white-space:pre;font:normal 11px 'Liberation Sans', sans-serif;color:#000;letter-spacing:-0.189px;">Layers</span><span style="position:absolute;left:444.6px;top:454.8px;line-height:13px;white-space:pre;font:normal 11px 'Liberation Sans', sans-serif;color:#000;letter-spacing:-0.270px;">Notes</span><span style="position:absolute;left:444.6px;top:468.8px;line-height:13px;white-space:pre;font:normal 11px 'Liberation Sans', sans-serif;color:#000;letter-spacing:-0.345px;">Redline</span><span style="position:absolute;left:444.6px;top:482.8px;line-height:13px;white-space:pre;font:normal 11px 'Liberation Sans', sans-serif;color:#000;letter-spacing:-0.079px;">Transparency</span><span style="position:absolute;left:444.6px;top:496.8px;line-height:13px;white-space:pre;font:normal 11px 'Liberation Sans', sans-serif;color:#000;letter-spacing:-0.924px;">JDF</span><span style="position:absolute;left:444.6px;top:510.8px;line-height:13px;white-space:pre;font:normal 11px 'Liberation Sans', sans-serif;color:#000;letter-spacing:-0.452px;">Summary</span><div style="position:absolute;left:439.2px;top:422.2px;width:130.5px;height:20.3px;background:transparent;box-sizing:border-box;border:3px solid #e5383b;"></div><span style="position:absolute;left:586.4px;top:322.9px;line-height:13px;white-space:pre;font:normal 11px 'Liberation Sans', sans-serif;color:#000;letter-spacing:-0.216px;">Bleed Options</span><div style="position:absolute;left:664.5px;top:332px;width:283.5px;height:1px;background:#a0a0a0;"></div><div style="position:absolute;left:580px;top:309.2px;width:222px;height:50.4px;background:transparent;box-sizing:border-box;border:3px solid #e5383b;"></div><div style="position:absolute;left:599px;top:343.8px;width:13px;height:13px;background:#fff;box-sizing:border-box;border:1px solid #0078d7;"></div><svg style="position:absolute;left:599px;top:343.8px" width="13" height="13" viewBox="0 0 13 13"><path d="M2.6 6.6L5.2 9.3L10.6 3.5" stroke="#0a6cc8" stroke-width="1.3" fill="none"/></svg><span style="position:absolute;left:614.6px;top:344.5px;line-height:13px;white-space:pre;font:normal 11px 'Liberation Sans', sans-serif;color:#000;letter-spacing:-0.190px;">Use Layout Bleed Settings</span><span style="position:absolute;left:600.4px;top:371.5px;line-height:13px;white-space:pre;font:normal 11px 'Liberation Sans', sans-serif;color:#a3a3a3;letter-spacing:-0.182px;">Bleed Type:</span><div style="position:absolute;left:665.2px;top:368.2px;width:143.6px;height:19.4px;background:#cccccc;box-sizing:border-box;border:1px solid #bfbfbf;"></div><span style="position:absolute;left:668.6px;top:372.3px;line-height:13px;white-space:pre;font:normal 11px 'Liberation Sans', sans-serif;color:#838383;letter-spacing:-0.339px;">Symmetric</span><svg style="position:absolute;left:792px;top:372px" width="16" height="12" viewBox="0 0 16 12"><path d="M3.5 4L8 8.5L12.5 4" stroke="#bdbdbd" stroke-width="1.2" fill="none"/></svg><span style="position:absolute;left:600.0px;top:400.6px;line-height:13px;white-space:pre;font:normal 11px 'Liberation Sans', sans-serif;color:#a3a3a3;letter-spacing:-0.238px;">Amount:</span><div style="position:absolute;left:647.3px;top:397.5px;width:85.5px;height:19px;background:#f0f0f0;box-sizing:border-box;border:1px solid #cfcfcf;box-shadow:inset 0 0 0 1px #e6e6e6;"></div><span style="position:absolute;left:650.7px;top:400.8px;line-height:13px;white-space:pre;font:normal 11px 'Liberation Sans', sans-serif;color:#6d6d6d;letter-spacing:0.000px;">3</span><span style="position:absolute;left:659.1px;top:400.8px;line-height:13px;white-space:pre;font:normal 11px 'Liberation Sans', sans-serif;color:#6d6d6d;letter-spacing:-1.114px;">mm</span><span style="position:absolute;left:602.5px;top:429.7px;line-height:13px;white-space:pre;font:normal 11px 'Liberation Sans', sans-serif;color:#a3a3a3;letter-spacing:-0.158px;">Bottom:</span><div style="position:absolute;left:647.3px;top:426.6px;width:85.5px;height:19px;background:#f0f0f0;box-sizing:border-box;border:1px solid #cfcfcf;box-shadow:inset 0 0 0 1px #e6e6e6;"></div><span style="position:absolute;left:650.7px;top:429.9px;line-height:13px;white-space:pre;font:normal 11px 'Liberation Sans', sans-serif;color:#6d6d6d;letter-spacing:0.000px;">3</span><span style="position:absolute;left:659.1px;top:429.9px;line-height:13px;white-space:pre;font:normal 11px 'Liberation Sans', sans-serif;color:#6d6d6d;letter-spacing:-1.114px;">mm</span><span style="position:absolute;left:769.5px;top:400.6px;line-height:13px;white-space:pre;font:normal 11px 'Liberation Sans', sans-serif;color:#a3a3a3;letter-spacing:0.079px;">Left:</span><div style="position:absolute;left:800.4px;top:397.5px;width:85.5px;height:19px;background:#f0f0f0;box-sizing:border-box;border:1px solid #cfcfcf;box-shadow:inset 0 0 0 1px #e6e6e6;"></div><span style="position:absolute;left:803.8px;top:400.8px;line-height:13px;white-space:pre;font:normal 11px 'Liberation Sans', sans-serif;color:#6d6d6d;letter-spacing:0.000px;">3</span><span style="position:absolute;left:812.2px;top:400.8px;line-height:13px;white-space:pre;font:normal 11px 'Liberation Sans', sans-serif;color:#6d6d6d;letter-spacing:-1.114px;">mm</span><span style="position:absolute;left:763.7px;top:429.7px;line-height:13px;white-space:pre;font:normal 11px 'Liberation Sans', sans-serif;color:#a3a3a3;letter-spacing:-0.192px;">Right:</span><div style="position:absolute;left:800.4px;top:426.6px;width:85.5px;height:19px;background:#f0f0f0;box-sizing:border-box;border:1px solid #cfcfcf;box-shadow:inset 0 0 0 1px #e6e6e6;"></div><span style="position:absolute;left:803.8px;top:429.9px;line-height:13px;white-space:pre;font:normal 11px 'Liberation Sans', sans-serif;color:#6d6d6d;letter-spacing:0.000px;">3</span><span style="position:absolute;left:812.2px;top:429.9px;line-height:13px;white-space:pre;font:normal 11px 'Liberation Sans', sans-serif;color:#6d6d6d;letter-spacing:-1.114px;">mm</span><div style="position:absolute;left:601px;top:463.3px;width:13px;height:13px;background:#fff;box-sizing:border-box;border:1px solid #333;"></div><svg style="position:absolute;left:601px;top:463.3px" width="13" height="13" viewBox="0 0 13 13"><path d="M2.6 6.6L5.2 9.3L10.6 3.5" stroke="#111" stroke-width="1.2" fill="none"/></svg><span style="position:absolute;left:616.7px;top:463.8px;line-height:13px;white-space:pre;font:normal 11px 'Liberation Sans', sans-serif;color:#000;letter-spacing:-0.312px;">Clip at Bleed Edge</span><div style="position:absolute;left:677.2px;top:636.3px;width:72.8px;height:21.6px;background:#e1e1e1;box-sizing:border-box;border:2px solid #0078d7;"></div><span style="position:absolute;left:704.8px;top:640.7px;line-height:13px;white-space:pre;font:normal 11px 'Liberation Sans', sans-serif;color:#000;letter-spacing:-0.353px;">OK</span><div style="position:absolute;left:761px;top:636.5px;width:72.5px;height:21px;background:#e1e1e1;box-sizing:border-box;border:1px solid #adadad;"></div><span style="position:absolute;left:780.3px;top:640.7px;line-height:13px;white-space:pre;font:normal 11px 'Liberation Sans', sans-serif;color:#000;letter-spacing:-0.342px;">Cancel</span><div style="position:absolute;left:845.2px;top:636.5px;width:102.8px;height:21px;background:#e1e1e1;box-sizing:border-box;border:1px solid #adadad;"></div><span style="position:absolute;left:855.5px;top:640.7px;line-height:13px;white-space:pre;font:normal 11px 'Liberation Sans', sans-serif;color:#000;letter-spacing:-0.059px;">Capture Settings</span></body></html>
